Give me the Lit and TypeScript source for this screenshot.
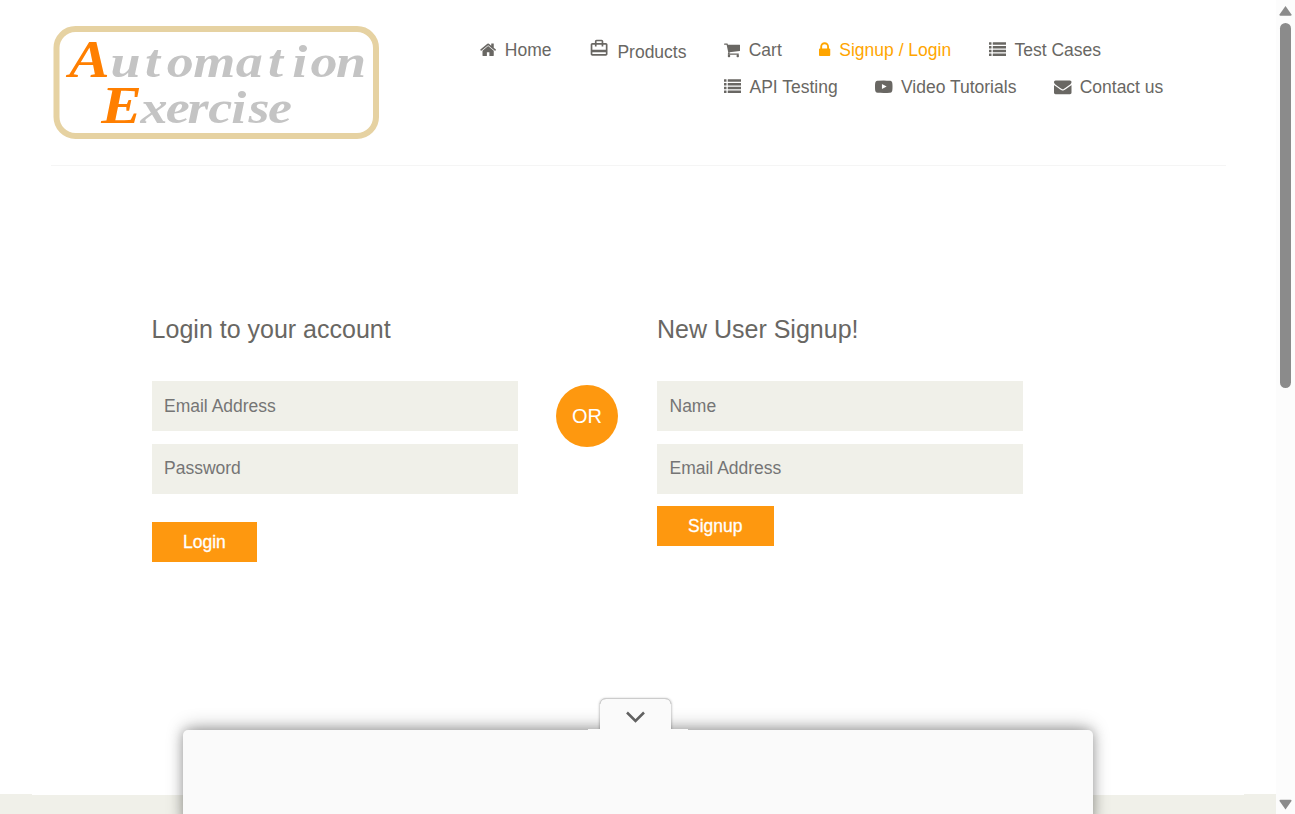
import { LitElement, html, svg, css } from "lit";
import { customElement, property } from "lit/decorators.js";

const glyphs: Record<string, { box: string; w: number; body: unknown }> = {
  home: { box: "64 0 1664 1792", w: 16.25, body: svg`<path d="M1472 992v480q0 26-19 45t-45 19h-384v-384h-256v384h-384q-26 0-45-19t-19-45v-480q0-1 .5-3t.5-3l575-474 575 474q1 2 1 6zm223-69l-62 74q-8 9-21 11h-3q-13 0-21-7l-692-577-692 577q-12 8-24 7-13-2-21-11l-62-74q-8-10-7-23.5t11-21.5l719-599q32-26 76-26t76 26l244 204v-195q0-14 9-23t23-9h192q14 0 23 9t9 23v408l219 182q10 8 11 21.5t-7 23.5z"/>` },
  cart: { box: "64 0 1664 1792", w: 16.25, body: svg`<path d="M704 1536q0 52-38 90t-90 38-90-38-38-90 38-90 90-38 90 38 38 90zm896 0q0 52-38 90t-90 38-90-38-38-90 38-90 90-38 90 38 38 90zm128-1088v512q0 24-16.5 42.5t-40.5 21.5l-1044 122q13 60 13 70 0 16-24 64h920q26 0 45 19t19 45-19 45-45 19h-1024q-26 0-45-19t-19-45q0-11 8-31.5t16-36 21.5-40 15.5-29.5l-177-823h-204q-26 0-45-19t-19-45 19-45 45-19h256q16 0 28.5 6.5t19.5 15.5 13 24.5 8 26 5.5 29.5 4.5 26h1201q26 0 45 19t19 45z"/>` },
  lock: { box: "320 0 1152 1792", w: 11.25, body: svg`<path d="M640 768h512v-192q0-106-75-181t-181-75-181 75-75 181v192zm832 96v576q0 40-28 68t-68 28h-960q-40 0-68-28t-28-68v-576q0-40 28-68t68-28h32v-192q0-184 132-316t316-132 316 132 132 316v192h32q40 0 68 28t28 68z"/>` },
  list: { box: "0 0 1792 1792", w: 17.5, body: [128, 512, 896, 1280].map((y) => svg`<rect x="0" y=${y} width="256" height="256" rx="32"/><rect x="384" y=${y} width="1408" height="256" rx="32"/>`) },
  video: { box: "0 0 1792 1792", w: 17.5, body: svg`<path d="M711 1128l484-250-484-253v503zm185-862q168 0 324.5 4.5t229.5 9.5l73 4q1 0 17 1.5t23 3 23.5 4.5 28.5 8 28 13 31 19.5 29 26.5q6 6 15.5 18.5t29 58.5 26.5 101q8 64 12.5 136.5t5.5 113.5v176q1 145-18 290-7 55-25 99.5t-32 61.5l-14 17q-14 15-29 26.5t-31 19-28 12.5-28.5 8-24 4.5-23 3-16.5 1.5q-251 19-627 19-207-2-359.5-6.5t-200.5-7.5l-49-4-36-4q-36-5-54.5-10t-51-21-56.5-41q-6-6-15.5-18.5t-29-58.5-26.5-101q-8-64-12.5-136.5t-5.5-113.5v-176q-1-145 18-290 7-55 25-99.5t32-61.5l14-17q14-15 29-26.5t31-19.5 28-13 28.5-8 23.5-4.5 23-3 17-1.5q251-18 627-18z"/>` },
  mail: { box: "0 0 1792 1792", w: 17.5, body: svg`<path d="M1792 710v794q0 66-47 113t-113 47h-1472q-66 0-113-47t-47-113v-794q44 49 101 87 362 246 497 345 57 42 92.5 65.5t94.5 48 110 24.5h2q51 0 110-24.5t94.5-48 92.5-65.5q170-123 498-345 57-39 100-87zm0-294q0 79-49 151t-122 123q-376 261-468 325-10 7-42.5 31t-54 38.5-52 32.5-57.5 27-50 9h-2q-23 0-50-9t-57.5-27-52-32.5-54-38.5-42.5-31q-91-64-262-182.5t-205-142.5q-62-42-117-115.5t-55-136.5q0-78 41.5-130t118.5-52h1472q65 0 112.5 47t47.5 113z"/>` },
};

@customElement("nav-item")
export class NavItem extends LitElement {
  @property() icon = "home";
  @property() label = "";

  static styles = css`
    :host { display: block; color: #696763; }
    :host([active]) { color: orange; }
    .link { display: flex; gap: 8.6px; height: 20px; color: inherit; text-decoration: none; white-space: nowrap; line-height: 20px; }
    .wide { gap: 8.1px; }
    .icon { display: block; flex: none; fill: currentColor; margin-top: 1px; }
    .products { gap: 8.3px; }
    .products .icon { margin-top: -2px; }
    .products .text { padding-top: 2px; }
  `;

  render() {
    if (this.icon === "bag") {
      return html`<a class="link products"><svg class="icon" width="20.2" height="20.2" viewBox="0 0 24 24"><path d="M20 6h-3V4c0-1.110-.89-2-2-2H9c-1.110 0-2 .89-2 2v2H4c-1.110 0-2 .89-2 2v11c0 1.110.89 2 2 2h16c1.110 0 2-.89 2-2V8c0-1.110-.89-2-2-2zM9 4h6v2H9V4zm11 15H4v-2h16v2zm0-5H4V8h3v2h2V8h6v2h2V8h3v6z"/></svg><span class="text">${this.label}</span></a>`;
    }
    const g = glyphs[this.icon];
    return html`<a class="link ${g.w > 17 ? "wide" : ""}"><svg class="icon" width=${g.w} height="17.5" viewBox=${g.box}>${g.body}</svg><span class="text">${this.label}</span></a>`;
  }
}

@customElement("app-root")
export class AppRoot extends LitElement {
  static styles = css`
    * { box-sizing: border-box; }
    :host { display: flex; position: relative; width: 1295px; height: 814px; overflow: hidden; background: #fff; font: 17.5px/20px "Liberation Sans", Arial, sans-serif; color: #696763; }
    .page { width: 1276px; display: flex; flex-direction: column; }
    .header { display: flex; height: 166px; width: 1175px; margin-left: 51px; border-bottom: 1px solid #f5f5f5; }
    .logo { display: block; margin: 26px 0 0 2px; flex: none; }
    .logo-text { font: italic 700 47px "Liberation Serif", serif; fill: #c4c4c4; }
    .cap { fill: #ff7f00; font-size: 53px; }
    .nav { display: flex; gap: 37.4px; margin: 40px 0 0 101px; align-items: flex-start; }
    .rows { display: flex; flex-direction: column; gap: 17px; }
    .row { display: flex; gap: 37.7px; }
    .forms { display: flex; align-items: flex-start; height: 628px; padding: 149px 0 0 152px; }
    .form { width: 366px; display: flex; flex-direction: column; align-items: flex-start; }
    .title { margin: 0 0 38px -.4px; font-size: 25px; line-height: 28px; font-weight: 400; white-space: nowrap; }
    .signup .title { margin-left: 0; }
    .field { display: block; width: 366px; height: 50px; margin: 0 0 12.5px; padding: 0 12px; border: 0; border-radius: 0; background: #f0f0e9; font: inherit; outline: none; }
    .signup .field { padding: 0 12.5px; }
    .field::placeholder { color: #757575; opacity: 1; }
    .button { height: 40px; padding: 0 31px; border: 0; background: #fe980f; color: #fff; font: inherit; -webkit-text-stroke: .3px #fff; }
    .login-button { margin-top: 16px; }
    .or { width: 62px; height: 62px; margin: 70px 39px 0 38px; border-radius: 50%; background: #fe980f; color: #fff; font-size: 20px; line-height: 62px; text-align: center; }
    .footer { height: 20px; display: flex; background: #f0f0e9; }
    .gap-line { width: 1212px; height: 1px; margin-left: 32px; background: #fff; }
    .scroll { width: 19px; background: #fcfcfc; display: flex; flex-direction: column; align-items: center; }
    .arrow { display: block; fill: #8b8b8b; }
    .up { margin: 5px 0 7px; }
    .down { margin: auto 0 4px; }
    .thumb { width: 11px; height: 365px; border-radius: 6px; background: #8b8b8b; }
    .sheet { position: absolute; left: 183px; top: 730px; width: 910px; height: 100px; border-radius: 5px 5px 0 0; background: #fafafa; box-shadow: 0 0 12px rgba(0,0,0,.26), 0 -4px 20px -3px rgba(0,0,0,.32); }
    .tab { position: absolute; left: 588px; top: 690px; }
  `;

  render() {
    return html`
      <div class="page">
        <header class="header">
          <svg class="logo" width="326" height="113" viewBox="0 0 326 113">
            <rect x="3.500" y="3" width="319.500" height="107" rx="19" fill="none" stroke="#e6d2a2" stroke-width="6"/>
            <g transform="scale(1.150 1)">
              <text class="logo-text" y="51"><tspan class="cap" x="14">A</tspan><tspan x="50 80 99 122 159 187 208 224 246">utomation</tspan></text>
              <text class="logo-text" y="97"><tspan class="cap" x="42">E</tspan><tspan x="76 98 117 135 155 170 187">xercise</tspan></text>
            </g>
          </svg>
          <nav class="nav">
            <nav-item icon="home" label="Home"></nav-item>
            <nav-item icon="bag" label="Products"></nav-item>
            <div class="rows">
              <div class="row">
                <nav-item icon="cart" label="Cart"></nav-item>
                <nav-item active icon="lock" label="Signup / Login"></nav-item>
                <nav-item icon="list" label="Test Cases"></nav-item>
              </div>
              <div class="row">
                <nav-item icon="list" label="API Testing"></nav-item>
                <nav-item icon="video" label="Video Tutorials"></nav-item>
                <nav-item icon="mail" label="Contact us"></nav-item>
              </div>
            </div>
          </nav>
        </header>
        <main class="forms">
          <form class="form">
            <h2 class="title">Login to your account</h2>
            <input class="field" type="email" placeholder="Email Address" />
            <input class="field" type="password" placeholder="Password" />
            <button class="button login-button" type="button">Login</button>
          </form>
          <div class="or">OR</div>
          <form class="form signup">
            <h2 class="title">New User Signup!</h2>
            <input class="field" type="text" placeholder="Name" />
            <input class="field" type="email" placeholder="Email Address" />
            <button class="button" type="button">Signup</button>
          </form>
        </main>
        <footer class="footer"><div class="gap-line"></div></footer>
      </div>
      <div class="scroll">
        <svg class="arrow up" width="13" height="11" viewBox="0 0 13 11"><path d="M6.500 1L12.500 9.500Q12.700 10.800 11.500 10.800H1.500Q.3 10.800 .5 9.500Z"/></svg>
        <div class="thumb"></div>
        <svg class="arrow down" width="13" height="11" viewBox="0 0 13 11"><path d="M6.500 10.500L12.500 2Q12.700 .7 11.500 .7H1.500Q.3 .7 .5 2Z"/></svg>
      </div>
      <div class="sheet"></div>
      <svg class="tab" width="100" height="46" viewBox="0 0 100 46">
        <defs><filter id="soft" x="-20%" y="-30%" width="140%" height="160%"><feGaussianBlur stdDeviation="1.5"/></filter></defs>
        <path d="M12 40V15Q12 9 18 9H77Q83 9 83 15V40Z" fill="#000" opacity=".4" filter="url(#soft)"/>
        <path d="M0 39H12V15Q12 9 18 9H77Q83 9 83 15V39H100V46H0Z" fill="#fafafa"/>
        <path d="M12 14Q13 8.500 18 8.500H77Q82 8.500 83 14" fill="none" stroke="#ccc"/>
        <path d="M39 22.500L47.500 31L56 22.500" fill="none" stroke="#616161" stroke-width="2.500"/>
      </svg>
    `;
  }
}
